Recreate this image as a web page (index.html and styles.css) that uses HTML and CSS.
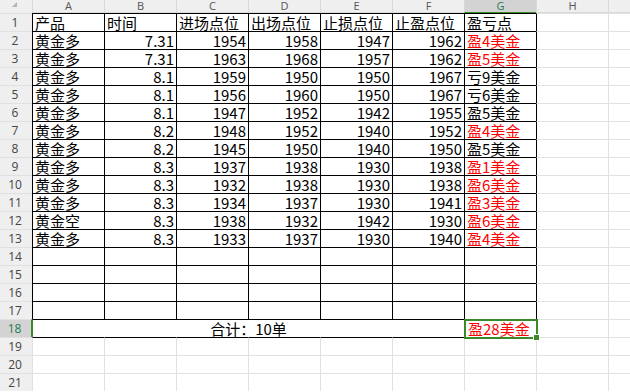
FILE: index.html
```html
<!DOCTYPE html>
<html lang="zh">
<head>
<meta charset="utf-8">
<link rel="stylesheet" href="styles.css">
</head>
<body>
<div class="sheet">
  <div class="row head">
    <div class="corner"><span class="tri"></span></div>
    <div class="ch">A</div><div class="ch">B</div><div class="ch">C</div><div class="ch">D</div><div class="ch">E</div><div class="ch">F</div><div class="ch on">G</div><div class="ch">H</div><div class="ch"></div>
  </div>
  <div class="row tbl">
    <div class="rh">1</div><div class="c txt">产品</div><div class="c txt">时间</div><div class="c txt">进场点位</div><div class="c txt">出场点位</div><div class="c txt">止损点位</div><div class="c txt">止盈点位</div><div class="c txt gtop">盈亏点</div><div class="c"></div><div class="c"></div>
  </div>
  <div class="row tbl">
    <div class="rh">2</div><div class="c txt">黄金多</div><div class="c num">7.31</div><div class="c num">1954</div><div class="c num">1958</div><div class="c num">1947</div><div class="c num">1962</div><div class="c txt red">盈4美金</div><div class="c"></div><div class="c"></div>
  </div>
  <div class="row tbl">
    <div class="rh">3</div><div class="c txt">黄金多</div><div class="c num">7.31</div><div class="c num">1963</div><div class="c num">1968</div><div class="c num">1957</div><div class="c num">1962</div><div class="c txt red">盈5美金</div><div class="c"></div><div class="c"></div>
  </div>
  <div class="row tbl">
    <div class="rh">4</div><div class="c txt">黄金多</div><div class="c num">8.1</div><div class="c num">1959</div><div class="c num">1950</div><div class="c num">1950</div><div class="c num">1967</div><div class="c txt">亏9美金</div><div class="c"></div><div class="c"></div>
  </div>
  <div class="row tbl">
    <div class="rh">5</div><div class="c txt">黄金多</div><div class="c num">8.1</div><div class="c num">1956</div><div class="c num">1960</div><div class="c num">1950</div><div class="c num">1967</div><div class="c txt">亏6美金</div><div class="c"></div><div class="c"></div>
  </div>
  <div class="row tbl">
    <div class="rh">6</div><div class="c txt">黄金多</div><div class="c num">8.1</div><div class="c num">1947</div><div class="c num">1952</div><div class="c num">1942</div><div class="c num">1955</div><div class="c txt">盈5美金</div><div class="c"></div><div class="c"></div>
  </div>
  <div class="row tbl">
    <div class="rh">7</div><div class="c txt">黄金多</div><div class="c num">8.2</div><div class="c num">1948</div><div class="c num">1952</div><div class="c num">1940</div><div class="c num">1952</div><div class="c txt red">盈4美金</div><div class="c"></div><div class="c"></div>
  </div>
  <div class="row tbl">
    <div class="rh">8</div><div class="c txt">黄金多</div><div class="c num">8.2</div><div class="c num">1945</div><div class="c num">1950</div><div class="c num">1940</div><div class="c num">1950</div><div class="c txt">盈5美金</div><div class="c"></div><div class="c"></div>
  </div>
  <div class="row tbl">
    <div class="rh">9</div><div class="c txt">黄金多</div><div class="c num">8.3</div><div class="c num">1937</div><div class="c num">1938</div><div class="c num">1930</div><div class="c num">1938</div><div class="c txt red">盈1美金</div><div class="c"></div><div class="c"></div>
  </div>
  <div class="row tbl">
    <div class="rh">10</div><div class="c txt">黄金多</div><div class="c num">8.3</div><div class="c num">1932</div><div class="c num">1938</div><div class="c num">1930</div><div class="c num">1938</div><div class="c txt red">盈6美金</div><div class="c"></div><div class="c"></div>
  </div>
  <div class="row tbl">
    <div class="rh">11</div><div class="c txt">黄金多</div><div class="c num">8.3</div><div class="c num">1934</div><div class="c num">1937</div><div class="c num">1930</div><div class="c num">1941</div><div class="c txt red">盈3美金</div><div class="c"></div><div class="c"></div>
  </div>
  <div class="row tbl">
    <div class="rh">12</div><div class="c txt">黄金空</div><div class="c num">8.3</div><div class="c num">1938</div><div class="c num">1932</div><div class="c num">1942</div><div class="c num">1930</div><div class="c txt red">盈6美金</div><div class="c"></div><div class="c"></div>
  </div>
  <div class="row tbl">
    <div class="rh">13</div><div class="c txt">黄金多</div><div class="c num">8.3</div><div class="c num">1933</div><div class="c num">1937</div><div class="c num">1930</div><div class="c num">1940</div><div class="c txt red">盈4美金</div><div class="c"></div><div class="c"></div>
  </div>
  <div class="row tbl">
    <div class="rh">14</div><div class="c"></div><div class="c"></div><div class="c"></div><div class="c"></div><div class="c"></div><div class="c"></div><div class="c"></div><div class="c"></div><div class="c"></div>
  </div>
  <div class="row tbl">
    <div class="rh">15</div><div class="c"></div><div class="c"></div><div class="c"></div><div class="c"></div><div class="c"></div><div class="c"></div><div class="c"></div><div class="c"></div><div class="c"></div>
  </div>
  <div class="row tbl">
    <div class="rh">16</div><div class="c"></div><div class="c"></div><div class="c"></div><div class="c"></div><div class="c"></div><div class="c"></div><div class="c"></div><div class="c"></div><div class="c"></div>
  </div>
  <div class="row tbl">
    <div class="rh">17</div><div class="c"></div><div class="c"></div><div class="c"></div><div class="c"></div><div class="c"></div><div class="c"></div><div class="c"></div><div class="c"></div><div class="c"></div>
  </div>
  <div class="row sum">
    <div class="rh on">18</div><div class="c merged">合计：10单</div><div class="c txt red sel">盈28美金</div><div class="c"></div><div class="c"></div>
  </div>
  <div class="row after">
    <div class="rh">19</div><div class="c"></div><div class="c"></div><div class="c"></div><div class="c"></div><div class="c"></div><div class="c"></div><div class="c"></div><div class="c"></div><div class="c"></div>
  </div>
  <div class="row">
    <div class="rh">20</div><div class="c"></div><div class="c"></div><div class="c"></div><div class="c"></div><div class="c"></div><div class="c"></div><div class="c"></div><div class="c"></div><div class="c"></div>
  </div>
  <div class="row">
    <div class="rh">21</div><div class="c"></div><div class="c"></div><div class="c"></div><div class="c"></div><div class="c"></div><div class="c"></div><div class="c"></div><div class="c"></div><div class="c"></div>
  </div>
</div>
</body>
</html>
```

FILE: styles.css
```css
html, body {
  margin: 0;
  padding: 0;
  background: #ffffff;
  overflow: hidden;
}

.sheet {
  display: flex;
  flex-direction: column;
  width: 630px;
  height: 392px;
  overflow: hidden;
  font-family: "Noto Sans CJK SC", "Noto Sans", sans-serif;
}

.row {
  display: grid;
  grid-template-columns: 32px repeat(8, 72px) 1fr;
  height: 18px;
  flex: none;
}

.row.head {
  height: 13px;
  background: #efefef;
}

.corner {
  position: relative;
  background: #efefef;
}

.tri {
  position: absolute;
  left: 12px;
  top: 2px;
  width: 0;
  height: 0;
  border-left: 5px solid transparent;
  border-bottom: 5px solid #b4b4b4;
}

.ch {
  box-sizing: border-box;
  border-left: 1px solid #d9d9d9;
  border-bottom: 1px solid #d9d9d9;
  font-family: "Open Sans", "Noto Sans", sans-serif;
  font-size: 11px;
  line-height: 11px;
  color: #555555;
  text-align: center;
  overflow: hidden;
}

.ch.on {
  background: #d3d3d3;
  color: #1f7a55;
  border-bottom: 1px solid #3a8a2a;
}

.rh {
  box-sizing: border-box;
  border-top: 1px solid #e0e0e0;
  background: #efefef;
  font-family: "Open Sans", "Noto Sans", sans-serif;
  font-size: 12px;
  line-height: 17px;
  color: #444444;
  text-align: center;
  padding-right: 2px;
}

.rh.on {
  background: #d3d3d3;
  color: #1f7a55;
  border-right: 1px solid #3a8a2a;
}

.c {
  box-sizing: border-box;
  border-left: 1px solid #e1e1e1;
  border-top: 1px solid #e1e1e1;
  display: flex;
  align-items: flex-end;
  font-size: 15px;
  line-height: 17px;
  color: #000000;
  white-space: nowrap;
  overflow: visible;
}

.tbl > .c:nth-child(n+2):nth-child(-n+9) {
  border-left-color: #000000;
}

.tbl > .c:nth-child(n+2):nth-child(-n+8) {
  border-top-color: #000000;
}

.after > .c:nth-child(n+2):nth-child(-n+8) {
  border-top-color: #000000;
}

.tbl > .c.gtop {
  border-top-color: #3a8a2a;
}

.txt {
  padding-left: 2px;
  justify-content: flex-start;
}

.num {
  padding-right: 2px;
  justify-content: flex-end;
}

.red {
  color: #ff0000;
}

.merged {
  grid-column: span 6;
  justify-content: center;
  border-left-color: #3a8a2a;
  border-top-color: #000000;
}

.sum > .sel {
  position: relative;
  border-left-color: #000000;
  border-top-color: #000000;
  padding-left: 3px;
}

.sel::after {
  content: "";
  position: absolute;
  left: -1px;
  top: -1px;
  right: -2px;
  bottom: -2px;
  border: 2px solid #3a8a2a;
}

.sel::before {
  content: "";
  position: absolute;
  right: -4px;
  bottom: -4px;
  width: 5px;
  height: 5px;
  background: #3a8a2a;
  border: 1px solid #ffffff;
  z-index: 2;
}
```
